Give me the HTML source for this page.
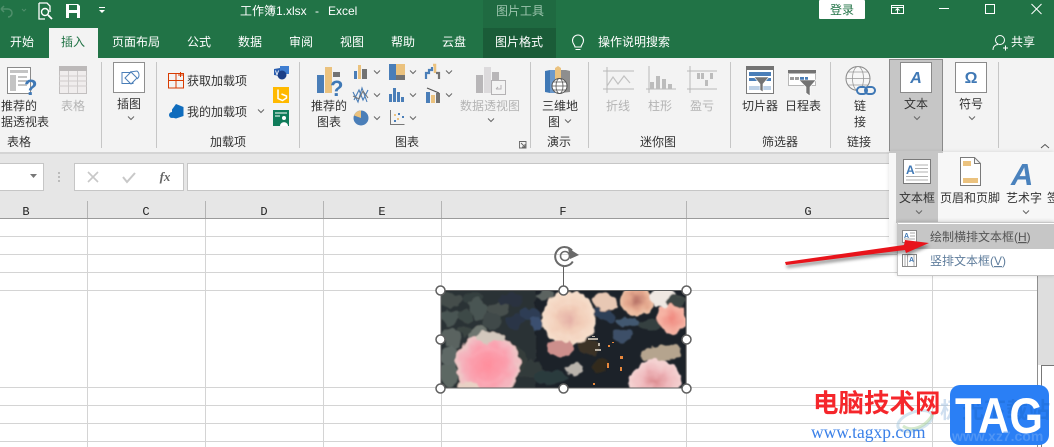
<!DOCTYPE html>
<html lang="zh"><head><meta charset="utf-8"><title>工作簿1.xlsx - Excel</title>
<style>
html,body{margin:0;padding:0;background:#fff;width:1054px;height:447px;overflow:hidden}
svg{display:block;position:absolute;left:0;top:0}
text{font-family:"Liberation Sans","Noto Sans CJK SC",sans-serif;font-size:12px;fill:#333}
.m{text-anchor:middle}
.w{fill:#fff}
.d{fill:#b4b4b4}
.h{font-family:"Liberation Mono",monospace;font-size:12px;fill:#222;text-anchor:middle}
</style></head><body>
<svg width="1054" height="447" viewBox="0 0 1054 447" xmlns="http://www.w3.org/2000/svg">
<defs>
<path id="c" d="M-3-1.5 0 1.5 3-1.5" fill="none" stroke="#666" stroke-width="1"/>
<filter id="b1" x="-5%" y="-5%" width="110%" height="110%" filterUnits="objectBoundingBox">
<feTurbulence type="fractalNoise" baseFrequency="0.11" numOctaves="2" seed="7" result="n"/>
<feDisplacementMap in="SourceGraphic" in2="n" scale="9" xChannelSelector="R" yChannelSelector="G"/>
<feGaussianBlur stdDeviation="0.7"/>
</filter>
<filter id="b2" x="-20%" y="-20%" width="140%" height="140%"><feGaussianBlur stdDeviation="1.5"/></filter>
<filter id="sh" x="-5%" y="-20%" width="110%" height="140%"><feGaussianBlur stdDeviation="2"/></filter>
<clipPath id="pc"><rect x="441" y="291" width="245" height="97"/></clipPath>
<radialGradient id="r1"><stop offset="0" stop-color="#ff8d9c"/><stop offset=".55" stop-color="#fb9fad"/><stop offset=".85" stop-color="#f4b6bf"/><stop offset="1" stop-color="#eecbc8"/></radialGradient>
<radialGradient id="r2"><stop offset="0" stop-color="#e4b0a6"/><stop offset=".45" stop-color="#f2cdb8"/><stop offset="1" stop-color="#f6dfcc"/></radialGradient>
<radialGradient id="r3"><stop offset="0" stop-color="#dc8c90"/><stop offset=".5" stop-color="#efb8bc"/><stop offset="1" stop-color="#f5d5d4"/></radialGradient>
<radialGradient id="r4"><stop offset="0" stop-color="#b87468"/><stop offset=".6" stop-color="#e4a88e"/><stop offset="1" stop-color="#efc4a8"/></radialGradient>
<radialGradient id="r5"><stop offset="0" stop-color="#f08a80"/><stop offset="1" stop-color="#f6b8a8"/></radialGradient>
</defs>

<!-- backgrounds -->
<rect width="1054" height="58" fill="#217346"/>
<rect x="483" width="73" height="28" fill="#1f6a41"/>
<rect x="483" y="28" width="73" height="30" fill="#1a5c38"/>
<rect y="58" width="1054" height="94" fill="#f3f3f3"/>
<rect y="152" width="1054" height="2" fill="#d4d4d4"/>
<rect y="154" width="1054" height="64" fill="#e6e6e6"/>
<rect x="49" y="28" width="49" height="30" fill="#f3f3f3"/>

<!-- quick access -->
<path d="M1 9h7a4 4 0 0 1 0 8M1 9l3-3M1 9l3 3" fill="none" stroke="#4f8f6b" stroke-width="1.5"/>
<path d="M22 9l2 2 2-2" fill="none" stroke="#4f8f6b"/>
<path d="M39 3h8l3 3v6M39 3v16h6" fill="none" stroke="#fff" stroke-width="1.3"/>
<circle cx="45" cy="12" r="3.5" fill="none" stroke="#fff" stroke-width="1.4"/>
<path d="M48 15l4 4" stroke="#fff" stroke-width="1.8"/>
<path d="M66 4h12l2 2v12H66z" fill="#fff"/>
<rect x="69" y="5" width="8" height="5" fill="#217346"/><rect x="69" y="13" width="8" height="5" fill="#217346"/>
<rect x="99" y="7" width="6" height="1" fill="#fff"/><path d="M99 10h6l-3 3z" fill="#fff"/>

<!-- title -->
<text class="w" x="240" y="15">工作簿1.xlsx</text>
<text class="w" x="315" y="15">-</text>
<text class="w" x="328" y="15">Excel</text>
<text x="496" y="15" style="fill:#9cc4ad">图片工具</text>
<rect x="819" y="0" width="46" height="19" rx="1" fill="#fff"/>
<text class="m" x="842" y="14" style="fill:#217346">登录</text>
<path d="M891.500 5.500h12v8h-12zM891.500 7.500h12M897.500 13v-4M895.500 10.500l2-2 2 2" fill="none" stroke="#fff"/>
<rect x="939" y="8" width="10" height="1" fill="#fff"/>
<rect x="985.500" y="4.500" width="9" height="9" fill="none" stroke="#fff"/>
<path d="M1031.500 4l10 10M1041.500 4l-10 10" stroke="#fff" fill="none"/>

<!-- tabs -->
<text class="w" x="10" y="46">开始</text>
<text x="61" y="46" style="fill:#217346">插入</text>
<text class="w" x="112" y="46">页面布局</text>
<text class="w" x="187" y="46">公式</text>
<text class="w" x="238" y="46">数据</text>
<text class="w" x="289" y="46">审阅</text>
<text class="w" x="340" y="46">视图</text>
<text class="w" x="391" y="46">帮助</text>
<text class="w" x="442" y="46">云盘</text>
<text class="w" x="495" y="46">图片格式</text>
<path d="M575 47c0-2-2.500-3-2.500-6.500a5.500 5.500 0 0 1 11 0c0 3.500-2.500 4.500-2.500 6.500zM575.500 49.500h5" fill="none" stroke="#fff" stroke-width="1.1"/>
<text class="w" x="598" y="46">操作说明搜索</text>
<circle cx="1000" cy="40" r="4.500" fill="none" stroke="#fff"/>
<path d="M993 50c0-4 3-5.500 5-5.500M1003 48h5M1005.500 45.500v5" fill="none" stroke="#fff"/>
<text class="w" x="1011" y="46">共享</text>

<!-- separators -->
<g fill="#c6c6c6">
<rect x="101" y="62" width="1" height="86"/><rect x="156" y="62" width="1" height="86"/><rect x="299" y="62" width="1" height="86"/>
<rect x="530" y="62" width="1" height="86"/><rect x="588" y="62" width="1" height="86"/><rect x="730" y="62" width="1" height="86"/>
<rect x="830" y="62" width="1" height="86"/><rect x="998" y="62" width="1" height="86"/>
</g>

<!-- recommended pivot -->
<rect x="7.500" y="67.500" width="23" height="26" fill="#fff" stroke="#8a8a8a"/>
<rect x="10" y="75" width="6" height="16" fill="#c4c4c4"/><rect x="10" y="70" width="18" height="3" fill="#c4c4c4"/>
<path d="M18 77h9M18 81h9M18 85h9" stroke="#c4c4c4" stroke-width="2"/>
<text x="24" y="95" style="font:bold 22px 'Liberation Sans';fill:#3f78b5">?</text>
<text x="1" y="110">推荐的</text>
<text x="1" y="126">据透视表</text>
<text x="7" y="146">表格</text>

<!-- table disabled -->
<rect x="59.500" y="66.500" width="27" height="27" fill="#f0eded" stroke="#c2bfbf"/>
<rect x="59" y="66" width="28" height="5" fill="#bcb9b9"/>
<path d="M59 76h28M59 81h28M59 86h28M68.500 71v22M77.500 71v22" stroke="#cfcccc"/>
<text class="d" x="61" y="110">表格</text>

<!-- illustrations -->
<rect x="113.500" y="62.500" width="31" height="30" fill="#fff" stroke="#8f8f8f"/>
<path d="M122 72.500h8l3 3v8h-11zM130 72l7-1 0 0a5 5 0 0 1 0 8" fill="none" stroke="#4a7eb8"/>
<path d="M131 72l6 6-6 6-6-6z" fill="#fff" stroke="#4a7eb8"/>
<text class="m" x="129" y="108">插图</text>
<use href="#c" x="131" y="118"/>

<!-- add-ins -->
<path d="M168.500 73.500h15v7h-7.500v7.500h-7.500zM168.500 80.500h7.500v-7M176 80.500h7.500v7.500h-7.500" fill="none" stroke="#d83b01" stroke-width="1"/>
<path d="M178 75h5M180.500 72v5" stroke="#d83b01"/>
<text x="187" y="85">获取加载项</text>
<path d="M176 104l7.500 3v9l-7.500 2.500-4-1v-8z" fill="#0f6cbd"/>
<circle cx="172" cy="115" r="3" fill="#0f6cbd"/>
<text x="187" y="116">我的加载项</text>
<use href="#c" x="261" y="111"/>
<path d="M274 69l6-1v8l-6-1z" fill="#2b5fb0"/><path d="M280 66h9v8h-9z" fill="#3f7ed1"/><circle cx="282" cy="75" r="4.500" fill="#1b3f87"/>
<text x="275" y="75" style="font:bold 6px 'Liberation Sans';fill:#fff">V</text>
<rect x="273" y="87" width="16" height="16" fill="#ffb900"/><path d="M278 89.500v9l4.500 2 4-2.500v-2l-5-2" fill="none" stroke="#fff" stroke-width="1.500"/>
<rect x="273" y="110" width="16" height="16" fill="#107c5a"/><path d="M275 113h12M275 116h5" stroke="#fff"/><circle cx="284" cy="118" r="2" fill="#fff"/><path d="M280 126c0-5 8-5 8 0z" fill="#fff"/>
<text class="m" x="228" y="146">加载项</text>

<!-- charts -->
<rect x="317" y="75" width="7" height="18" fill="#4a7eb8"/>
<rect x="325" y="67" width="7" height="26" fill="#ebc27e"/>
<rect x="333" y="72" width="7" height="5" fill="#737373"/>
<text x="330" y="96" style="font:bold 22px 'Liberation Sans';fill:#3f78b5">?</text>
<text x="311" y="110">推荐的</text>
<text x="317" y="126">图表</text>
<rect x="354" y="71" width="3" height="8" fill="#4a7eb8"/><rect x="358" y="65" width="3" height="14" fill="#ebc27e"/><rect x="362" y="69" width="5" height="10" fill="#737373"/>
<use href="#c" x="377" y="72"/>
<rect x="389" y="64" width="7" height="16" fill="#4a7eb8"/><rect x="396" y="64" width="9" height="11" fill="#ebc27e"/><rect x="396" y="75" width="9" height="5" fill="#737373"/>
<use href="#c" x="413" y="72"/>
<path d="M426 79v-6h3v-3h3v-3" fill="none" stroke="#4a7eb8" stroke-width="2.200"/><path d="M433 65h2v8" fill="none" stroke="#ebc27e" stroke-width="2.500"/><path d="M436 73h3v6" fill="none" stroke="#737373" stroke-width="2.200"/>
<use href="#c" x="449" y="72"/>
<path d="M353 92l5 10 4-14 5 14M354 100l5-10 4 10 5-10" fill="none" stroke="#4a7eb8" stroke-width="1.100"/><path d="M353 96l6 3 4-8 5 7" fill="none" stroke="#737373"/>
<use href="#c" x="377" y="95"/>
<rect x="389" y="94" width="3" height="8" fill="#4a7eb8"/><rect x="393" y="88" width="3" height="14" fill="#4a7eb8"/><rect x="397" y="92" width="3" height="10" fill="#4a7eb8"/><rect x="401" y="97" width="3" height="5" fill="#4a7eb8"/>
<use href="#c" x="413" y="95"/>
<rect x="426" y="92" width="4" height="11" fill="#4a7eb8"/><rect x="431" y="95" width="4" height="8" fill="#ebc27e"/><rect x="436" y="93" width="4" height="10" fill="#737373"/>
<path d="M427 88l12 5" stroke="#555" stroke-width="1.200"/>
<use href="#c" x="449" y="95"/>
<circle cx="361" cy="118" r="7.500" fill="#4a7eb8"/><path d="M361 118v-7.500a7.500 7.500 0 0 0-7 5z" fill="#ebc27e"/>
<use href="#c" x="377" y="118"/>
<path d="M390.500 110v14.500h14" fill="none" stroke="#777"/>
<g fill="#ebc27e"><rect x="394" y="114" width="2" height="2"/><rect x="397" y="118" width="2" height="2"/></g><g fill="#4a7eb8"><rect x="398" y="113" width="2" height="2"/><rect x="402" y="116" width="2" height="2"/><rect x="394" y="120" width="2" height="2"/></g>
<use href="#c" x="413" y="118"/>
<rect x="476" y="75" width="7" height="18" fill="#b8b6b8"/><rect x="484" y="67" width="7" height="26" fill="#dcdadc"/><rect x="492" y="72" width="7" height="21" fill="#b8b6b8"/>
<rect x="491.500" y="80.500" width="14" height="14" fill="#f3f3f3" stroke="#b4b2b4"/><path d="M496 89h5v-4M496 89l2-2" fill="none" stroke="#b4b2b4"/>
<text class="d" x="460" y="110">数据透视图</text>
<use href="#c" x="491" y="120"/>
<text class="m" x="407" y="146">图表</text>
<path d="M519.500 141.500h6.500v6.500h-6.500zM521 143l3.500 3.500M525 144v3h-3" fill="none" stroke="#666" stroke-width=".9"/>

<!-- 3D map -->
<path d="M545 71l5-1v23l-5-1z" fill="#3f78b5"/><path d="M550 70h5v23h-5z" fill="#5d8fc7" opacity=".9"/><path d="M555 68l3-2 3 2v17h-6z" fill="#ebc27e"/><path d="M561 70h5l4 1v21l-9 1z" fill="#8e8e8e"/>
<circle cx="559.500" cy="86" r="7.500" fill="#fff" stroke="#555"/><ellipse cx="559.500" cy="86" rx="3.500" ry="7.500" fill="none" stroke="#555" stroke-width=".8"/><path d="M552 86h15M553 82h13M553 90h13" stroke="#555" stroke-width=".8"/>
<text x="542" y="110">三维地</text>
<text x="548" y="126">图</text>
<use href="#c" x="568" y="121"/>
<text class="m" x="559" y="146">演示</text>

<!-- sparklines -->
<path d="M603 71h31M603 89h31M607 67v26" stroke="#b8b8b8" fill="none"/>
<path d="M607 86l6-9 5 7 6-8 6 7" stroke="#c2c2c2" fill="none" stroke-width="1.200"/>
<text class="d" x="606" y="110">折线</text>
<path d="M646 89h30M649 66v27" stroke="#b8b8b8" fill="none"/>
<g fill="#bcbcbc"><rect x="650" y="82" width="4" height="7"/><rect x="656" y="76" width="4" height="13"/><rect x="662" y="79" width="4" height="10"/><rect x="668" y="84" width="4" height="5"/></g>
<text class="d" x="648" y="110">柱形</text>
<path d="M687 71h30M687 89h30M690 66v27" stroke="#b8b8b8" fill="none"/>
<g fill="#bcbcbc"><rect x="697" y="73" width="3" height="6"/><rect x="701" y="73" width="3" height="6"/><rect x="705" y="80" width="3" height="6"/><rect x="710" y="73" width="3" height="6"/></g>
<text class="d" x="690" y="110">盈亏</text>
<text class="m" x="658" y="146">迷你图</text>

<!-- slicer, timeline -->
<rect x="746.500" y="66.500" width="27" height="27" fill="#fff" stroke="#7b7b7b"/><rect x="746" y="66" width="28" height="4" fill="#737373"/>
<rect x="749" y="72" width="22" height="4" fill="#4a7eb8"/><rect x="749" y="78" width="22" height="3" fill="#4a7eb8"/><rect x="749" y="86" width="22" height="4" fill="#bcd0e6"/>
<path d="M754 77h15l-6 7v8l-3-2v-6z" fill="#737373" stroke="#fff" stroke-width=".6"/>
<text x="742" y="110">切片器</text>
<rect x="788" y="70" width="28" height="3" fill="#737373"/>
<rect x="788.500" y="73.500" width="27" height="12" fill="#fff" stroke="#b8b8b8"/>
<g fill="#9a9a9a"><rect x="790" y="77" width="4" height="3"/><rect x="795" y="77" width="4" height="3"/></g><g fill="#4a7eb8"><rect x="800" y="77" width="4" height="3"/><rect x="805" y="77" width="3" height="3"/></g>
<path d="M799 80h17l-6 7v9l-4-3v-6z" fill="#737373" stroke="#fff" stroke-width=".6"/>
<text x="785" y="110">日程表</text>
<text class="m" x="780" y="146">筛选器</text>

<!-- link -->
<circle cx="858" cy="78.500" r="12" fill="#f7f7f7" stroke="#888"/><ellipse cx="858" cy="78.500" rx="5.500" ry="12" fill="none" stroke="#999" stroke-width=".8"/><path d="M846 78.500h24M848 72h20M848 85h20" stroke="#999" stroke-width=".8"/>
<rect x="857" y="87" width="10" height="7" rx="3.500" fill="#f3f3f3" stroke="#3f78b5" stroke-width="2"/><rect x="865" y="87" width="10" height="7" rx="3.500" fill="none" stroke="#3f78b5" stroke-width="2"/>
<text class="m" x="860" y="110">链</text>
<text class="m" x="860" y="126">接</text>
<text class="m" x="859" y="146">链接</text>

<!-- text button -->
<rect x="889.500" y="59.500" width="53" height="94" fill="#c6c6c6" stroke="#8a8a8a"/>
<rect x="900.500" y="62.500" width="31" height="30" fill="#fff" stroke="#8a8a8a"/>
<text class="m" x="916" y="83" style="font:italic bold 16px 'Liberation Sans';fill:#3f78b5">A</text>
<text class="m" x="916" y="108">文本</text>
<use href="#c" x="917" y="118"/>
<rect x="955.500" y="62.500" width="31" height="30" fill="#fff" stroke="#8a8a8a"/>
<text class="m" x="971" y="83" style="font:bold 16px 'Liberation Sans';fill:#3f78b5">Ω</text>
<text class="m" x="971" y="108">符号</text>
<use href="#c" x="972" y="118"/>
<path d="M1041 148l4-3.500 4 3.500" fill="none" stroke="#555"/>

<!-- formula bar -->
<rect x="-2" y="163.500" width="45.500" height="27" fill="#fff" stroke="#c6c6c6"/>
<path d="M30 174h7l-3.500 4z" fill="#777"/>
<g fill="#bbb"><rect x="58" y="172" width="2" height="2"/><rect x="58" y="176" width="2" height="2"/><rect x="58" y="180" width="2" height="2"/></g>
<rect x="74.500" y="163.500" width="109" height="27" fill="#fff" stroke="#c6c6c6"/>
<path d="M88 172l10 10M98 172l-10 10" stroke="#c8c8c8" stroke-width="1.600"/>
<path d="M123 177l4 5 8-9" fill="none" stroke="#c8c8c8" stroke-width="2"/>
<text class="m" x="165" y="181" style="font:italic bold 13px 'Liberation Serif';fill:#666">fx</text>
<rect x="187.500" y="163.500" width="870" height="27" fill="#fff" stroke="#c6c6c6"/>

<!-- column headers -->
<g fill="#b4b4b4"><rect x="87" y="201" width="1" height="17"/><rect x="205" y="201" width="1" height="17"/><rect x="323" y="201" width="1" height="17"/><rect x="441" y="201" width="1" height="17"/><rect x="686" y="201" width="1" height="17"/><rect x="932" y="201" width="1" height="17"/></g>
<text class="h" x="26" y="215">B</text><text class="h" x="146" y="215">C</text><text class="h" x="264" y="215">D</text><text class="h" x="382" y="215">E</text><text class="h" x="563" y="215">F</text><text class="h" x="808" y="215">G</text>
<rect y="218" width="1037" height="1" fill="#9a9a9a"/>

<!-- grid -->
<g fill="#d4d4d4">
<rect y="236" width="1037" height="1"/><rect y="254" width="1037" height="1"/><rect y="272" width="1037" height="1"/><rect y="290" width="1037" height="1"/>
<rect y="387" width="1037" height="1"/><rect y="405" width="1037" height="1"/><rect y="423" width="1037" height="1"/><rect y="441" width="1037" height="1"/>
<rect x="87" y="219" width="1" height="228"/><rect x="205" y="219" width="1" height="228"/><rect x="323" y="219" width="1" height="228"/><rect x="441" y="219" width="1" height="228"/><rect x="686" y="219" width="1" height="228"/><rect x="932" y="219" width="1" height="228"/>
</g>

<!-- scrollbar -->
<rect x="1037" y="218" width="1" height="229" fill="#8e8e8e"/>
<rect x="1038" y="218" width="16" height="147" fill="#dedede"/>
<rect x="1041" y="365" width="13" height="82" fill="#fff"/>
<path d="M1041.500 447V365.500H1054" fill="none" stroke="#777"/>

<!-- picture -->
<g clip-path="url(#pc)">
<rect x="441" y="291" width="245" height="97" fill="#1c2229"/>
<g filter="url(#b1)">
<rect x="436" y="286" width="100" height="105" fill="#2b3335"/>
<g fill="#4a5452">
<ellipse cx="450" cy="300" rx="12" ry="7" fill="#444e4c"/><ellipse cx="472" cy="298" rx="10" ry="5" fill="#363f3f"/><ellipse cx="478" cy="309" rx="8" ry="11" transform="rotate(-30 478 309)"/>
<ellipse cx="449" cy="317" rx="10" ry="8"/><ellipse cx="465" cy="316" rx="8" ry="6" fill="#3e4846"/><ellipse cx="492" cy="321" rx="10" ry="8" fill="#3f4a48"/><ellipse cx="497" cy="309" rx="11" ry="6" fill="#47504e"/>
<ellipse cx="510" cy="300" rx="12" ry="6" fill="#2a3340"/>
<ellipse cx="452" cy="338" rx="8" ry="11" transform="rotate(-25 452 338)" fill="#5a6461"/><ellipse cx="466" cy="331" rx="8" ry="5" fill="#3a4442"/><ellipse cx="478" cy="336" rx="7" ry="12" transform="rotate(20 478 336)" fill="#6e7670"/>
<ellipse cx="450" cy="357" rx="8" ry="10" fill="#5f6966"/><ellipse cx="449" cy="376" rx="9" ry="12" fill="#5d6764"/>
<ellipse cx="530" cy="315" rx="11" ry="7" fill="#2e3e55"/><ellipse cx="515" cy="322" rx="9" ry="7" fill="#2a3647"/><ellipse cx="537" cy="323" rx="7" ry="6" fill="#3a5070"/><ellipse cx="545" cy="295" rx="9" ry="5" fill="#5c6460"/>
<ellipse cx="530" cy="370" rx="15" ry="9" fill="#333b3a"/><ellipse cx="515" cy="360" rx="11" ry="13" fill="#343c3a"/><ellipse cx="550" cy="377" rx="17" ry="7" fill="#2c3a3e"/>
<ellipse cx="623" cy="335" rx="10" ry="6" fill="#3c5068"/><ellipse cx="628" cy="322" rx="13" ry="4" fill="#42586f"/><ellipse cx="603" cy="315" rx="13" ry="5" transform="rotate(30 603 315)" fill="#2f4058"/>
<ellipse cx="650" cy="325" rx="11" ry="6" fill="#36403f"/><ellipse cx="677" cy="300" rx="9" ry="7" fill="#454d4a"/>
<ellipse cx="575" cy="369" rx="10" ry="5" fill="#b9b3ac"/>
<ellipse cx="590" cy="347" rx="10" ry="8" fill="#3a3226"/>
<ellipse cx="600" cy="365" rx="9" ry="8" fill="#33291e"/>
</g>
<circle cx="488" cy="365" r="32" fill="url(#r1)"/>
<ellipse cx="490" cy="337" rx="15" ry="6" fill="#d3c8bd"/>
<ellipse cx="468" cy="386" rx="10" ry="4" fill="#e9d1c5"/>
<circle cx="569" cy="319" r="27" fill="url(#r2)"/>
<ellipse cx="560" cy="348" rx="14" ry="8" fill="#cd8f8c"/>
<ellipse cx="605" cy="302" rx="13" ry="8" transform="rotate(25 605 302)" fill="#e8c8b4"/>
<circle cx="637" cy="300" r="16" fill="url(#r4)"/>
<ellipse cx="663" cy="298" rx="14" ry="10" fill="#efe8e2"/>
<ellipse cx="675" cy="302" rx="10" ry="8" fill="#3e4744"/>
<ellipse cx="672" cy="319" rx="14" ry="15" fill="url(#r5)"/>
<ellipse cx="662" cy="353" rx="20" ry="8" transform="rotate(-8 662 353)" fill="#b5a48e"/>
<ellipse cx="655" cy="381" rx="26" ry="21" fill="url(#r3)"/>
</g>
<path d="M472 358c6-10 24-12 32-2M476 378c8 8 20 6 27-4M555 312c4-10 20-12 28-4M556 332c8 6 20 6 28-2" fill="none" stroke="#fff" stroke-width="1.500" opacity=".18" filter="url(#b2)"/>
<g fill="#e8883c"><rect x="608" y="345" width="2" height="2"/><rect x="620" y="356" width="3" height="3"/><rect x="607" y="363" width="2" height="5"/><rect x="620" y="367" width="2" height="4"/><rect x="612" y="342" width="2" height="1"/><rect x="593" y="383" width="2" height="2"/></g>
<g fill="#b8b0a4"><rect x="588" y="338" width="10" height="2"/><rect x="592" y="336" width="3" height="1"/><rect x="595" y="349" width="6" height="2"/><rect x="598" y="343" width="2" height="3"/></g>
</g>
<rect x="441" y="290.500" width="245" height="97.500" fill="none" stroke="#5f5f5f" stroke-width="1"/>
<path d="M563.500 266v24" stroke="#5f5f5f"/>
<path d="M572 250.500a9.500 9.500 0 1 0 .8 11" fill="none" stroke="#6a6a6a" stroke-width="2"/>
<circle cx="565" cy="256" r="4.500" fill="none" stroke="#6a6a6a" stroke-width="1.600"/>
<path d="M568 248l11 7-9 4z" fill="#6a6a6a"/>
<g fill="#fff" stroke="#5f5f5f" stroke-width="1.500">
<circle cx="440.500" cy="290.500" r="4.500"/><circle cx="563.500" cy="290.500" r="4.500"/><circle cx="686.500" cy="290.500" r="4.500"/>
<circle cx="440.500" cy="339.500" r="4.500"/><circle cx="686.500" cy="339.500" r="4.500"/>
<circle cx="440.500" cy="388.500" r="4.500"/><circle cx="563.500" cy="388.500" r="4.500"/><circle cx="686.500" cy="388.500" r="4.500"/>
</g>

<!-- dropdown panel -->
<rect x="889" y="152" width="165" height="91" fill="#000" opacity=".12" filter="url(#sh)"/>
<rect x="889" y="152" width="165" height="91" fill="#f7f7f7"/>
<rect x="889" y="151" width="54" height="2" fill="#c6c6c6"/>
<rect x="896" y="153" width="42" height="70" fill="#c6c6c6"/>
<rect x="903.500" y="159.500" width="27" height="24" fill="#fff" stroke="#7a7a7a"/>
<text x="906" y="174" style="font:bold 12px 'Liberation Sans';fill:#3f78b5">A</text>
<path d="M915 165h13M915 168.500h13M915 172h13M906 176.500h22M906 180h22" stroke="#b0b0b0"/>
<text x="899" y="202">文本框</text>
<use href="#c" x="919" y="212"/>
<path d="M960.500 157.500h14l6 6v22h-20zM974.500 157.500v6h6" fill="#fff" stroke="#7a7a7a"/>
<rect x="963" y="161" width="8" height="5" fill="#ebc27e"/><rect x="963" y="178" width="15" height="5" fill="#ebc27e"/>
<text x="940" y="202">页眉和页脚</text>
<text x="1011" y="185" style="font:italic bold 31px 'Liberation Sans';fill:#4a82bd">A</text>
<text x="1006" y="202">艺术字</text>
<use href="#c" x="1026" y="212"/>
<text x="1047" y="202">签</text>

<!-- menu -->
<rect x="897" y="222" width="157" height="53" fill="#000" opacity=".22" filter="url(#sh)"/>
<rect x="897.500" y="222.500" width="158" height="53" fill="#fff" stroke="#c6c6c6"/>
<rect x="898" y="224" width="156" height="25" fill="#c6c6c6"/>
<rect x="902.500" y="230.500" width="14" height="12" fill="#fff" stroke="#888"/>
<text x="904" y="238" style="font:bold 7px 'Liberation Sans';fill:#3f78b5">A</text>
<path d="M910 233h5M910 236h5M904 239h11" stroke="#aaa"/>
<text x="930" y="241" style="fill:#555">绘制横排文本框(<tspan text-decoration="underline">H</tspan>)</text>
<rect x="902.500" y="254.500" width="14" height="12" fill="#fff" stroke="#888"/>
<text x="909" y="262" style="font:bold 7px 'Liberation Sans';fill:#3f78b5">A</text>
<path d="M905 255v11M907.500 255v11M914 255v11" stroke="#aaa"/>
<text x="930" y="265" style="fill:#5f7d9c">竖排文本框(<tspan text-decoration="underline">V</tspan>)</text>

<!-- red arrow -->
<path d="M785 262L904 245L905 240L929 243L906 253L905 250L786 265z" fill="#000" opacity=".4" filter="url(#b2)" transform="translate(1 3)"/>
<path d="M785 262L904 245L905 240L929 243L906 253L905 250L786 265z" fill="#e8141b"/>

<!-- watermark -->
<ellipse cx="915" cy="421" rx="18" ry="9" fill="none" stroke="#9ec4dc" stroke-width="3" opacity=".45" transform="rotate(-20 915 421)"/>
<path d="M903 426c8 6 22 2 30-12" fill="none" stroke="#aad49c" stroke-width="3" opacity=".5"/>
<text x="813" y="412" style="font:bold 25.500px 'Liberation Sans','Noto Sans CJK SC',sans-serif;fill:#f5262b">电脑技术网</text>
<text x="811" y="438" style="font:17.500px 'Liberation Serif',serif;fill:#3a80e8">www.tagxp.com</text>
<text x="940" y="418" style="font:bold 22px 'Liberation Sans','Noto Sans CJK SC',sans-serif;fill:#a9c6e4;opacity:.55">极</text>
<rect x="950" y="385" width="99" height="60" rx="10" fill="#2a7ff5"/>
<text x="962" y="418" style="font:bold 22px 'Liberation Sans','Noto Sans CJK SC',sans-serif;fill:#1f6fd8;opacity:.6">光下载站</text>
<text x="955" y="433" style="font:bold 50px 'Liberation Sans',sans-serif;fill:#fff" textLength="88" lengthAdjust="spacingAndGlyphs">TAG</text>
<text x="952" y="441" style="font:bold 14px 'Liberation Sans';fill:#5f9ff5;opacity:.7">www.xz7.com</text>
</svg>
</body></html>
